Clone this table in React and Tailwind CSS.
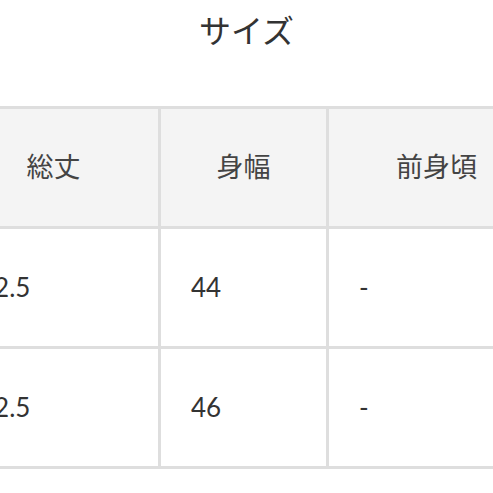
const rows = [
  ["72.5", "44", "-"],
  ["72.5", "46", "-"],
];

export default function App() {
  return (
    <main className="w-[493px] h-[493px] overflow-hidden bg-white font-['Lato','Noto_Sans_CJK_JP',sans-serif]">
      <div className="h-[106px] flex justify-center pt-[12px]">
        <h1 className="text-[32px] leading-[38px] text-[#333]">サイズ</h1>
      </div>

      <div className="-ml-[54px] w-[601px] grid grid-cols-[209px_165px_215px] gap-[3px] p-[3px] bg-[#dedede]">
        {["総丈", "身幅", "前身頃"].map((h) => (
          <div key={h} className="h-[117px] bg-[#f4f4f4] flex items-center justify-center text-[27px] text-[#444]">
            {h}
          </div>
        ))}
        {rows.map((r, i) =>
          r.map((c, j) => (
            <div key={i + "-" + j} className="h-[117px] bg-white flex items-center pl-[30px] text-[26px] text-[#333]">
              {c}
            </div>
          ))
        )}
      </div>
    </main>
  );
}
